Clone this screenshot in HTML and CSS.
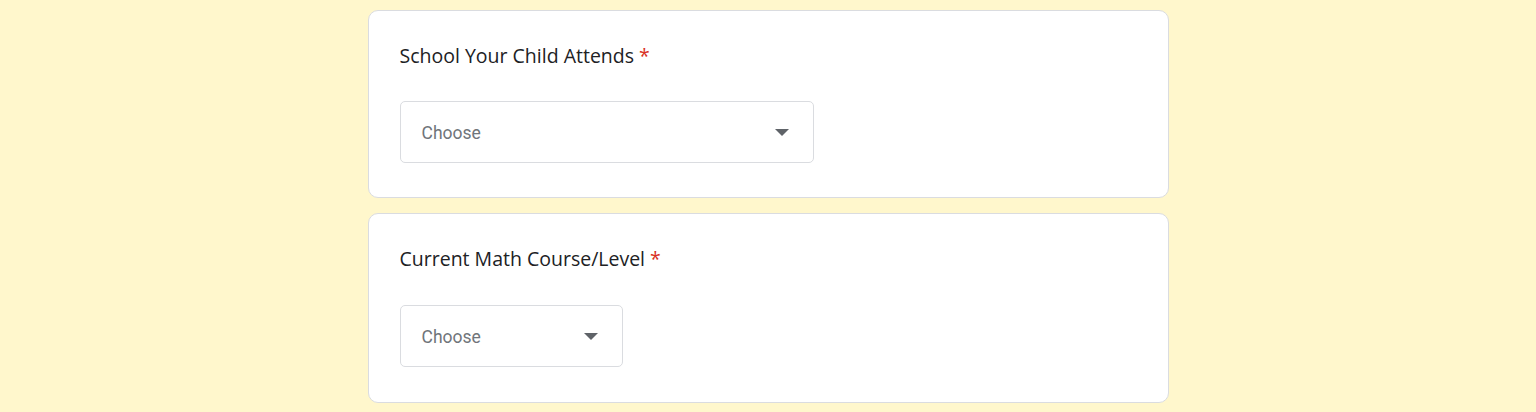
FILE: index.html
```html
<!DOCTYPE html>
<html>
<head>
<meta charset="utf-8">
<link rel="stylesheet" href="styles.css">
</head>
<body>
<main class="form">
  <section class="card">
    <div class="title">School Your Child Attends <span class="req">*</span></div>
    <div class="select wide">
      <span class="placeholder">Choose</span>
      <svg class="arrow" width="14" height="7" viewBox="0 0 14 7"><path d="M0 0h14L7 7z" fill="#5f6368"/></svg>
    </div>
  </section>
  <section class="card second">
    <div class="title">Current Math Course/Level <span class="req">*</span></div>
    <div class="select narrow">
      <span class="placeholder">Choose</span>
      <svg class="arrow" width="14" height="7" viewBox="0 0 14 7"><path d="M0 0h14L7 7z" fill="#5f6368"/></svg>
    </div>
  </section>
</main>
</body>
</html>
```
FILE: styles.css
```css
html, body {
  margin: 0;
  padding: 0;
  background: #fff7cc;
}
.form {
  width: 801px;
  margin: 10px auto 0;
  display: flex;
  flex-direction: column;
  gap: 15px;
}
.card {
  box-sizing: border-box;
  background: #fff;
  border: 1px solid #dadce0;
  border-radius: 10px;
  padding: 30px 30px 34px 31px;
  display: flex;
  flex-direction: column;
  gap: 30px;
}
.card.second {
  gap: 31px;
  padding-bottom: 35px;
}
.title {
  font-family: "Open Sans", sans-serif;
  font-size: 19.5px;
  line-height: 30px;
  color: #202124;
  letter-spacing: 0;
}
.req {
  color: #d93025;
}
.select {
  box-sizing: border-box;
  height: 62px;
  border: 1px solid #dadce0;
  border-radius: 5px;
  display: flex;
  align-items: center;
  justify-content: space-between;
  padding: 1px 24px 0 21px;
}
.wide { width: 414px; }
.narrow { width: 223px; }
.placeholder {
  font-family: Roboto, sans-serif;
  font-size: 17.5px;
  color: #70757a;
}
.arrow { display: block; }
```
